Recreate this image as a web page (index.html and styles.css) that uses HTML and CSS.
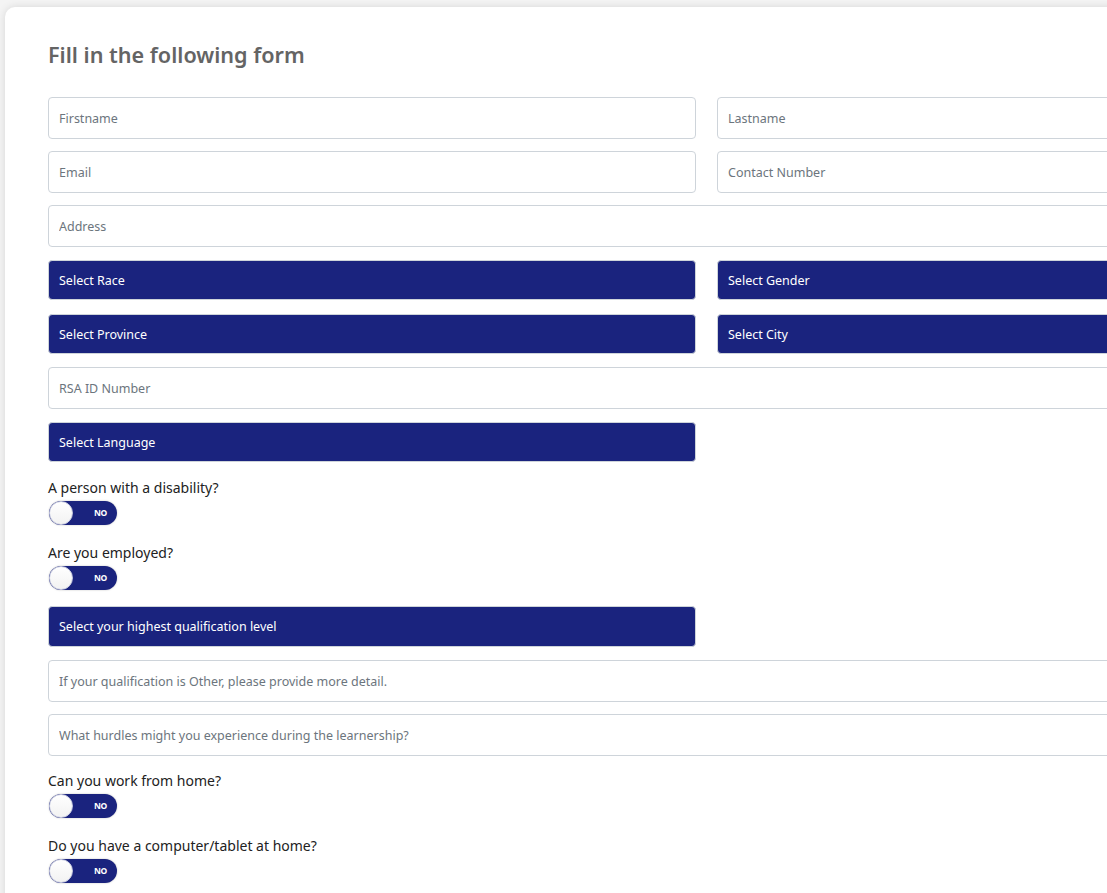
FILE: index.html
```html
<!DOCTYPE html>
<html lang="en">
<head>
    <meta charset="UTF-8">
    <meta name="viewport" content="width=device-width, initial-scale=1.0">
    <title>Learnership Application</title>
    <link rel="stylesheet" href="styles.css">
</head>
<body>

    <div class="card">
        <h2 class="title">Fill in the following form</h2>

        <form class="form">
            <div class="row">
                <input class="field" type="text" placeholder="Firstname">
                <input class="field" type="text" placeholder="Lastname">
            </div>
            <div class="row">
                <input class="field" type="email" placeholder="Email">
                <input class="field" type="tel" placeholder="Contact Number">
            </div>
            <div class="row">
                <input class="field full" type="text" placeholder="Address">
            </div>

            <div class="row select-row">
                <div class="select">Select Race</div>
                <div class="select">Select Gender</div>
            </div>
            <div class="row select-row">
                <div class="select">Select Province</div>
                <div class="select">Select City</div>
            </div>
            <div class="row">
                <input class="field full" type="text" placeholder="RSA ID Number">
            </div>
            <div class="row select-row">
                <div class="select">Select Language</div>
            </div>

            <div class="question">
                <label>A person with a disability?</label>
                <div class="toggle"><span class="knob"></span><span class="toggle-text">NO</span></div>
            </div>
            <div class="question">
                <label>Are you employed?</label>
                <div class="toggle"><span class="knob"></span><span class="toggle-text">NO</span></div>
            </div>

            <div class="row select-row qualification">
                <div class="select">Select your highest qualification level</div>
            </div>
            <div class="row">
                <input class="field full" type="text" placeholder="If your qualification is Other, please provide more detail.">
            </div>
            <div class="row">
                <input class="field full" type="text" placeholder="What hurdles might you experience during the learnership?">
            </div>

            <div class="question">
                <label>Can you work from home?</label>
                <div class="toggle"><span class="knob"></span><span class="toggle-text">NO</span></div>
            </div>
            <div class="question">
                <label>Do you have a computer/tablet at home?</label>
                <div class="toggle"><span class="knob"></span><span class="toggle-text">NO</span></div>
            </div>
        </form>
    </div>

</body>
</html>
```

FILE: styles.css
```css
body {
    font-family: "Noto Sans", "Open Sans", sans-serif;
    background-color: #f4f4f4;
    color: #212529;
    margin: 0;
    padding: 7px 0 40px 5px;
}
.card {
    width: 1403px;
    box-sizing: border-box;
    background: #fff;
    border-radius: 10px;
    box-shadow: 0 0 8px rgba(0, 0, 0, 0.12);
    padding: 35px 43px 30px;
}
.title {
    font-size: 21.6px;
    font-weight: 600;
    color: #646464;
    margin: 0 0 29px 0;
    line-height: 26px;
}
.form {
    display: flex;
    flex-direction: column;
}
.row {
    display: grid;
    grid-template-columns: 648px 648px;
    column-gap: 21px;
    margin-bottom: 12px;
}
/* selects are 2px shorter than inputs, centred in the same row height */
.select-row {
    padding: 1px 0;
}
.qualification .select {
    height: 41px;
}
.field {
    height: 42px;
    box-sizing: border-box;
    border: 1px solid #ced4da;
    border-radius: 4px;
    padding: 0 10px;
    font-family: inherit;
    font-size: 12.5px;
    color: #495057;
    outline: none;
}
.field::placeholder {
    color: #6c757d;
}
.full {
    grid-column: 1 / 3;
}
.select {
    height: 40px;
    box-sizing: border-box;
    background: #1a237e;
    border: 1px solid #ced4da;
    border-radius: 4px;
    color: #fff;
    font-size: 12.5px;
    padding: 0 10px;
    display: flex;
    align-items: center;
}
.question {
    margin: 3px 0 15px;
}
.question label {
    display: block;
    font-size: 14px;
    line-height: 20px;
    color: #222;
    margin-bottom: 3px;
}
.toggle {
    width: 68px;
    height: 24px;
    margin-left: 1px;
    border-radius: 12px;
    background: #1a237e;
    position: relative;
    box-shadow: 0 0 2px rgba(0, 0, 0, 0.25);
}
.knob {
    position: absolute;
    left: 0;
    top: 0;
    width: 24px;
    height: 24px;
    box-sizing: border-box;
    border-radius: 50%;
    background: linear-gradient(#fff, #f2f2f2);
    border: 1px solid #c8cbe0;
}
.toggle-text {
    position: absolute;
    right: 10px;
    top: 0;
    line-height: 24px;
    font-size: 8.5px;
    font-weight: 700;
    color: #fff;
    letter-spacing: -0.3px;
}
```
